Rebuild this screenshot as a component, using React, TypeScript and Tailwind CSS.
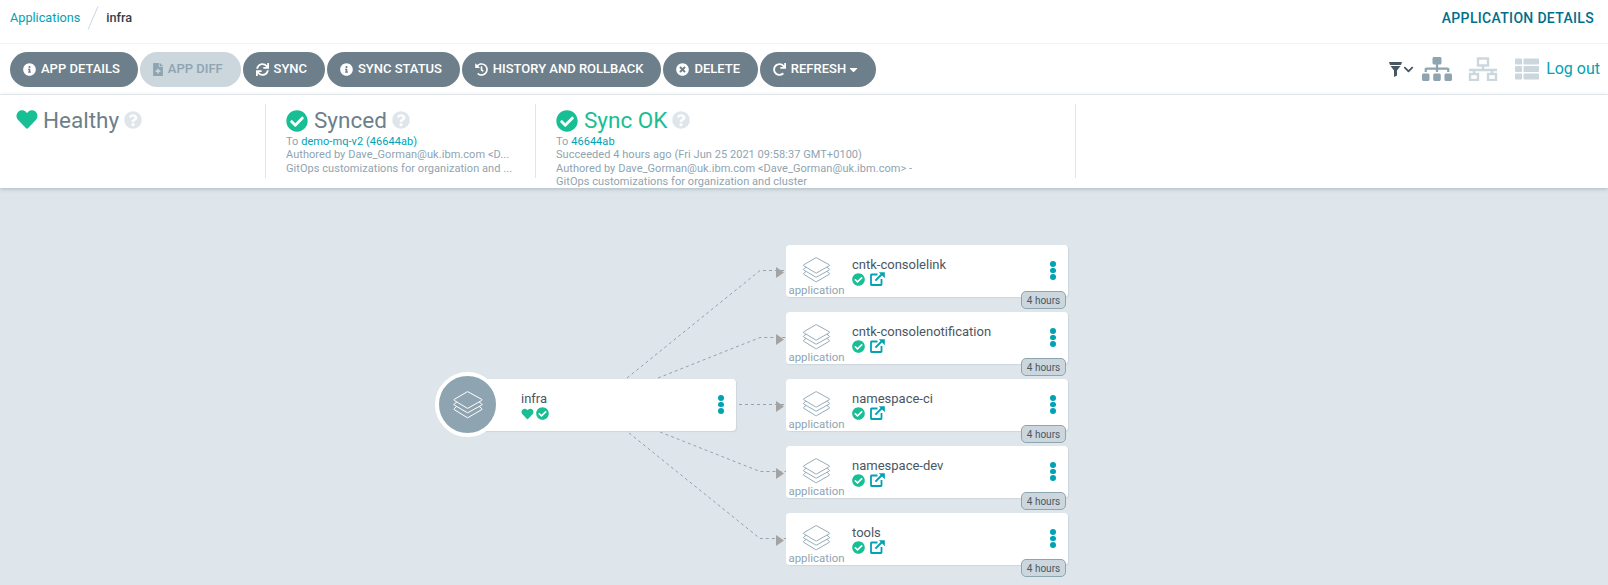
import React from "react";
import {
  FaCaretDown,
  FaCheckCircle,
  FaChevronDown,
  FaFileMedical,
  FaHeart,
  FaHistory,
  FaInfoCircle,
  FaQuestionCircle,
  FaRedo,
  FaSitemap,
  FaSync,
  FaThList,
  FaTimesCircle,
} from "react-icons/fa";

function Stack({ className }: { className: string }) {
  return (
    <svg viewBox="0 0 30 28" fill="none" stroke="currentColor" strokeWidth="1" strokeLinejoin="round" className={className}>
      <path d="M15 .8 28.8 8.4a.6.6 0 0 1 0 1L15 17.2a.8.8 0 0 1-.8 0L1.2 9.4a.6.6 0 0 1 0-1L14.2.8a.8.8 0 0 1 .8 0Z" />
      <path d="M3.8 11 1.2 13a.6.6 0 0 0 0 1l13 7.6a.8.8 0 0 0 .8 0L28.8 14a.6.6 0 0 0 0-1L26.2 11" />
      <path d="M3.8 15.4 1.2 17.6a.6.6 0 0 0 0 1l13 8a.8.8 0 0 0 .8 0l13.8-8a.6.6 0 0 0 0-1L26.2 15.4" />
    </svg>
  );
}

function ExternalLink() {
  return (
    <svg viewBox="0 0 15 14" className="h-[14px] w-[15px] text-[#00a2b3]" fill="none" stroke="currentColor">
      <path d="M7.5 2.5H1.5a.5.5 0 0 0-.5.5v9.500a.5.5 0 0 0 .5.5h9.500a.5.5 0 0 0 .5-.5V7" strokeWidth="1.8" />
      <path d="M5.4 8.6 12 2" strokeWidth="2" />
      <path d="M8.8 .2h6v6z" fill="currentColor" stroke="none" />
    </svg>
  );
}

function Kebab() {
  return (
    <div className="flex flex-col gap-[1.2px]">
      <span className="h-[5.6px] w-[5.6px] rounded-full bg-[#00a2b3]" />
      <span className="h-[5.6px] w-[5.6px] rounded-full bg-[#00a2b3]" />
      <span className="h-[5.6px] w-[5.6px] rounded-full bg-[#00a2b3]" />
    </div>
  );
}

function ToolButton({ icon, label, disabled }: { icon: React.ReactNode; label: React.ReactNode; disabled?: boolean }) {
  return (
    <button
      className={`flex h-[35px] items-center gap-[5px] rounded-[17.5px] pl-[13px] pr-[17.85px] text-[13px] font-medium ${
        disabled ? "bg-[#ccd6dd] text-[#8fa4b1]" : "bg-[#6d7f8b] text-white"
      }`}
    >
      {icon}
      {label}
    </button>
  );
}

function ChildNode({ name, pos }: { name: string; pos: string }) {
  return (
    <div className={`absolute left-[786px] flex h-[52px] w-[282px] rounded-[4px] bg-white shadow-[1px_1px_1px_#ccd6dd] ${pos}`}>
      <div className="flex w-[61px] shrink-0 flex-col items-center pt-[12px] text-[#8fa4b1]">
        <Stack className="h-[26px] w-[29px]" />
        <span className="text-[11.4px] leading-[14px]">application</span>
      </div>
      <div className="ml-[5px] flex min-w-0 flex-1 flex-col pt-[12px]">
        <span className="text-[13px] leading-[15px] text-[#495763]">{name}</span>
        <div className="flex items-center gap-[5px]">
          <FaCheckCircle className="h-[13px] w-[13px] text-[#18be94]" />
          <ExternalLink />
        </div>
      </div>
      <div className="flex items-center pr-[12px] pb-[1px]">
        <Kebab />
      </div>
      <span className="absolute right-[2px] top-[46px] flex h-[18px] w-[45px] items-center justify-center rounded-[5px] border border-[#8fa4b1] bg-[#ccd6dd] text-[10px] text-[#495763]">
        4 hours
      </span>
    </div>
  );
}

function Edge({ d }: { d: string }) {
  return <path d={d} fill="none" stroke="#8fa4b1" strokeWidth="1" strokeDasharray="3 3" />;
}

function Arrow({ d }: { d: string }) {
  return <path d={d} fill="#a3a3a3" />;
}

export default function App() {
  return (
    <div className="flex h-[585px] w-[1608px] flex-col overflow-hidden bg-[#dee6eb] font-['Roboto',sans-serif]">
      <header className="flex h-[44px] shrink-0 items-center justify-between border-b border-[#eff3f5] bg-white pl-[10px] pr-[14px] pb-[7px]">
        <div className="flex items-center text-[12.7px]">
          <span className="text-[#00a2b3]">Applications</span>
          <svg viewBox="0 0 12 24" className="ml-[7px] mr-[7px] h-[24px] w-[12px]">
            <path d="M11 .5 1 23.5" stroke="#ccd6dd" strokeWidth="1" />
          </svg>
          <span className="font-medium text-[#363c4a]">infra</span>
        </div>
        <span className="text-[14px] font-medium tracking-[0.32px] text-[#006f8a]">APPLICATION DETAILS</span>
      </header>

      <div className="flex h-[51px] shrink-0 items-center justify-between border-b border-[#eff3f5] bg-white pl-[10px] pr-[8px]">
        <div className="flex items-center gap-[2px]">
          <ToolButton icon={<FaInfoCircle className="h-[13px] w-[13px]" />} label="APP DETAILS" />
          <ToolButton disabled icon={<FaFileMedical className="h-[13px] w-[10px]" />} label="APP DIFF" />
          <ToolButton icon={<FaSync className="h-[13px] w-[13px]" />} label="SYNC" />
          <ToolButton icon={<FaInfoCircle className="h-[13px] w-[13px]" />} label="SYNC STATUS" />
          <ToolButton icon={<FaHistory className="h-[13px] w-[13px]" />} label="HISTORY AND ROLLBACK" />
          <ToolButton icon={<FaTimesCircle className="h-[13px] w-[13px]" />} label="DELETE" />
          <ToolButton
            icon={<FaRedo className="h-[13px] w-[13px]" />}
            label={
              <span className="flex items-center gap-[3px]">
                REFRESH
                <FaCaretDown className="h-[13px] w-[9px]" />
              </span>
            }
          />
        </div>
        <div className="flex items-center">
          <svg viewBox="0 0 13 15" className="h-[15px] w-[13px] text-[#495763]">
            <path d="M0 0H13L12 3H1Z M1.5 4H11.5L8 8.5V13.5L5 15V8.5Z" fill="currentColor" />
          </svg>
          <FaChevronDown className="ml-[1px] h-[11px] w-[11px] text-[#495763]" />
          <FaSitemap className="ml-[8px] h-[24px] w-[30px] text-[#8fa4b1]" />
          <svg viewBox="0 0 30 24" fill="none" stroke="#ccd6dd" strokeWidth="2.4" className="ml-[16px] h-[24px] w-[30px]">
            <rect x="10" y="1.500" width="10" height="7" />
            <path d="M15 8v5M1 13h28M6 13v3M24 13v3" />
            <rect x="2" y="17" width="8" height="6" />
            <rect x="20" y="17" width="8" height="6" />
          </svg>
          <FaThList className="ml-[17px] h-[24px] w-[24px] text-[#ccd6dd]" />
          <span className="ml-[7px] text-[16px] text-[#00a2b3]">Log out</span>
        </div>
      </div>

      <section className="z-10 flex h-[93px] shrink-0 items-start bg-white pt-[9px] shadow-[0_1px_4px_rgba(109,127,139,0.45)]">
        <div className="flex h-[74px] w-[266px] shrink-0 items-start border-r border-[#dee6eb] pl-[15px] pt-[3px]">
          <FaHeart className="mt-[2px] h-[21px] w-[24px] text-[#18be94]" />
          <span className="ml-[4px] mt-[-1px] text-[22.5px] leading-[28px] text-[#6d7f8b]">Healthy</span>
          <FaQuestionCircle className="ml-[5px] mt-[4px] h-[18px] w-[18px] text-[#dee6eb]" />
        </div>
        <div className="h-[74px] w-[270px] shrink-0 border-r border-[#dee6eb] pl-[20px] pt-[3px]">
          <div className="flex items-start">
            <FaCheckCircle className="mt-[3px] h-[22px] w-[22px] text-[#18be94]" />
            <span className="ml-[6px] mt-[-1px] text-[22.5px] leading-[28px] text-[#6d7f8b]">Synced</span>
            <FaQuestionCircle className="ml-[5px] mt-[4px] h-[18px] w-[18px] text-[#dee6eb]" />
          </div>
          <div className="mt-[1px] text-[11px] leading-[13.4px] tracking-[0.05px] text-[#8fa4b1]">
            <div>
              To <span className="text-[#00a2b3]">demo-mq-v2 (46644ab)</span>
            </div>
            <div>Authored by Dave_Gorman@uk.ibm.com &lt;D...</div>
            <div>GitOps customizations for organization and ...</div>
          </div>
        </div>
        <div className="h-[74px] w-[540px] shrink-0 border-r border-[#dee6eb] pl-[20px] pt-[3px]">
          <div className="flex items-start">
            <FaCheckCircle className="mt-[3px] h-[22px] w-[22px] text-[#18be94]" />
            <span className="ml-[6px] mt-[-1px] text-[22.5px] leading-[28px] text-[#18be94]">Sync OK</span>
            <FaQuestionCircle className="ml-[5px] mt-[4px] h-[18px] w-[18px] text-[#dee6eb]" />
          </div>
          <div className="mt-[1px] text-[11px] leading-[13.4px] tracking-[0.05px] text-[#8fa4b1]">
            <div>
              To <span className="text-[#00a2b3]">46644ab</span>
            </div>
            <div>Succeeded 4 hours ago (Fri Jun 25 2021 09:58:37 GMT+0100)</div>
            <div>Authored by Dave_Gorman@uk.ibm.com &lt;Dave_Gorman@uk.ibm.com&gt; -</div>
            <div>GitOps customizations for organization and cluster</div>
          </div>
        </div>
      </section>

      <main className="relative flex-1">
        <div className="absolute left-0 top-[-188px] h-[585px] w-[1608px]">
          <svg viewBox="0 0 1608 585" className="absolute left-0 top-0 h-[585px] w-[1608px]">
            <Edge d="M627 378 760 270.5H786" />
            <Edge d="M658 378 760 337.5H786" />
            <Edge d="M739 404.5H786" />
            <Edge d="M660 432 760 471.5H786" />
            <Edge d="M629 433 760 538.5H786" />
            <Arrow d="M776 267 784 272.5 776 278Z" />
            <Arrow d="M776 334 784 339.5 776 345Z" />
            <Arrow d="M776 401 784 406.5 776 412Z" />
            <Arrow d="M776 468 784 473.5 776 479Z" />
            <Arrow d="M776 535 784 540.5 776 546Z" />
          </svg>

          <div className="absolute left-[467px] top-[379px] flex h-[52px] w-[269px] rounded-[4px] bg-white pl-[54px] shadow-[1px_1px_1px_#ccd6dd]">
            <div className="flex flex-1 flex-col pt-[12px]">
              <span className="text-[13px] leading-[15px] text-[#495763]">infra</span>
              <div className="flex items-center gap-[2px] pt-[1px]">
                <FaHeart className="h-[12px] w-[13px] text-[#18be94]" />
                <FaCheckCircle className="h-[13px] w-[13px] text-[#18be94]" />
              </div>
            </div>
            <div className="flex items-center pr-[12px] pb-[1px]">
              <Kebab />
            </div>
          </div>
          <div className="absolute left-[435px] top-[372px] flex h-[65px] w-[65px] items-center justify-center rounded-full border-4 border-white bg-[#8fa4b1] text-white">
            <Stack className="h-[28px] w-[30px]" />
          </div>

          <ChildNode name="cntk-consolelink" pos="top-[245px]" />
          <ChildNode name="cntk-consolenotification" pos="top-[312px]" />
          <ChildNode name="namespace-ci" pos="top-[379px]" />
          <ChildNode name="namespace-dev" pos="top-[446px]" />
          <ChildNode name="tools" pos="top-[513px]" />
        </div>
      </main>
    </div>
  );
}
